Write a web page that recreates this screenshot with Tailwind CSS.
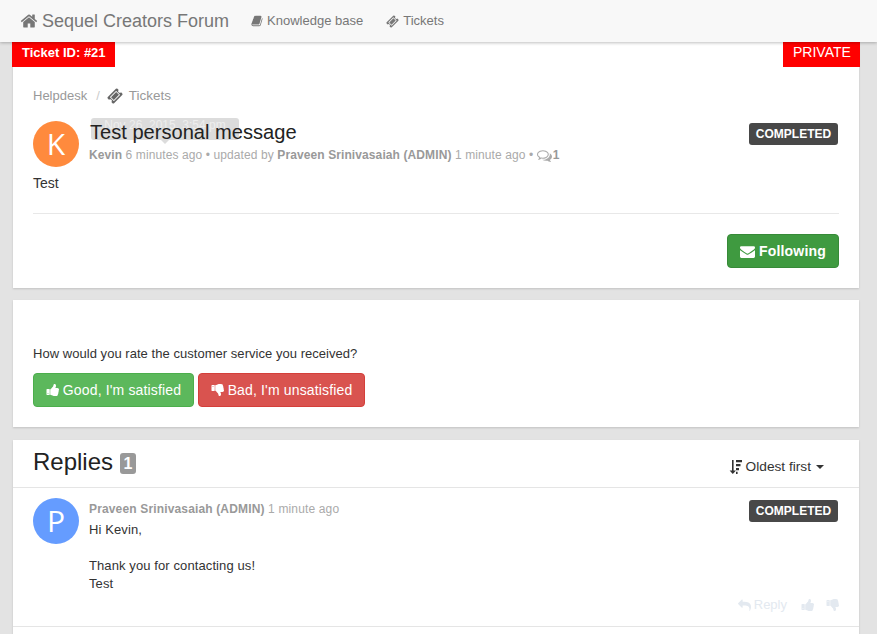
<!DOCTYPE html>
<html lang="en">
<head>
    <meta charset="UTF-8">
    <title>Sequel Creators Forum</title>
    <script src="https://cdn.jsdelivr.net/npm/@tailwindcss/browser@4"></script>
</head>
<body class="bg-[#e3e3e3] h-[634px] overflow-hidden font-['Liberation_Sans',Arial,sans-serif] text-[14px] leading-[18px] text-[#333]">
    <!-- Navbar -->
    <nav class="h-[42px] bg-[#f8f8f8] shadow-[0_1px_3px_rgba(0,0,0,0.25)] relative z-10 flex items-center pl-[20px] text-[#777]">
        <a class="flex items-center text-[18px] mr-[22px]">
            <svg class="w-[18px] h-[18px] mr-[4px] fill-[#777]" viewBox="0 0 1792 1792"><path d="M1472 992v480q0 26-19 45t-45 19h-384v-384h-256v384h-384q-26 0-45-19t-19-45v-480q0-1 .5-3t.5-3l575-474 575 474q1 2 1 6zm223-69l-62 74q-8 9-21 11h-3q-13 0-21-7l-692-577-692 577q-12 8-24 7-13-2-21-11l-62-74q-8-10-7-23.5t11-21.5l719-599q32-26 76-26t76 26l244 204v-195q0-14 9-23t23-9h192q14 0 23 9t9 23v408l219 182q10 8 11 21.5t-7 23.5z"/></svg>
            Sequel Creators Forum
        </a>
        <a class="flex items-center text-[13px] mr-[23px]">
            <svg class="w-[12px] h-[12px] mr-[4px] fill-[#777]" viewBox="0 0 1792 1792"><path d="M1703 478q40 57 18 129l-275 906q-19 64-76.5 107.5t-122.5 43.5h-923q-77 0-148.5-53.5t-99.5-131.5q-24-67-2-127 0-4 3-27t4-37q1-8-3-21.5t-3-19.5q2-11 8-21t16.5-23.5 16.5-23.5q23-38 45-91.5t30-91.5q3-10 .5-30t-.5-28q3-11 17-28t17-23q21-36 42-92t25-90q1-9-2.5-32t.5-28q4-13 22-30.5t22-22.5q19-26 42.5-84.5t27.5-96.5q1-8-3-25.5t-2-26.5q2-8 9-18t18-23 17-21q8-12 16.5-30.5t15-35 16-36 19.5-32 26.5-23.5 36-11.5 47.5 5.5l-1 3q38-9 51-9h761q74 0 114 56t18 130l-274 906q-36 119-71.5 153.5t-128.5 34.5h-869q-27 0-38 15-11 16-1 43 24 70 144 70h923q29 0 56-15.5t35-41.5l300-987q7-22 5-57 38 15 59 43z"/></svg>
            Knowledge base
        </a>
        <a class="flex items-center text-[13px]">
            <svg class="w-[13px] h-[13px] mr-[4px] fill-[#777]" viewBox="0 0 1792 1792"><path d="M1024 452l316 316-572 572-316-316zm-211 979l618-618q19-19 19-45t-19-45l-362-362q-18-18-45-18t-45 18l-618 618q-19 19-19 45t19 45l362 362q18 18 45 18t45-18zm889-637l-907 908q-37 37-90.5 37t-90.5-37l-126-126q56-56 56-136t-56-136-136-56-136 56l-125-126q-37-37-37-90.5t37-90.5l907-906q37-37 90.5-37t90.5 37l125 125q-56 56-56 136t56 136 136 56 136-56l126 125q37 37 37 90.5t-37 90.5z"/></svg>
            Tickets
        </a>
    </nav>

    <main class="ml-[13px] w-[846px] flex flex-col">
        <!-- Ticket -->
        <section class="relative h-[246px] bg-white shadow-[0_1px_2px_rgba(0,0,0,0.15)] px-[20px]">
            <span class="absolute left-[-1px] top-0 w-[103px] h-[25px] bg-[#ff0000] text-white font-bold text-[13px] leading-[21px] pl-[10px]">Ticket ID: #21</span>
            <span class="absolute right-[-1px] top-0 w-[77px] h-[25px] bg-[#ff0000] text-white text-[14px] leading-[21px] pl-[10px]">PRIVATE</span>

            <div class="pt-[46px] flex items-center h-[62px] text-[13px] text-[#999]">
                <span>Helpdesk</span>
                <span class="ml-[9px] mr-[7px] text-[#ccc]">/</span>
                <svg class="w-[16px] h-[16px] mr-[6px] fill-[#666]" viewBox="0 0 1792 1792"><path d="M1024 452l316 316-572 572-316-316zm-211 979l618-618q19-19 19-45t-19-45l-362-362q-18-18-45-18t-45 18l-618 618q-19 19-19 45t19 45l362 362q18 18 45 18t45-18zm889-637l-907 908q-37 37-90.5 37t-90.5-37l-126-126q56-56 56-136t-56-136-136-56-136 56l-125-126q-37-37-37-90.5t37-90.5l907-906q37-37 90.5-37t90.5 37l125 125q-56 56-56 136t56 136 136 56 136-56l126 125q37 37 37 90.5t-37 90.5z"/></svg>
                <span class="text-[13.5px]">Tickets</span>
            </div>

            <div class="flex mt-[17px] pr-[1px]">
                <div class="w-[46px] h-[46px] rounded-full bg-[#ff8a3d] text-white text-[30px] leading-[46px] text-center font-['Open_Sans',sans-serif] shrink-0">K</div>
                <div class="relative ml-[10px] flex-1">
                    <!-- tooltip left behind the title -->
                    <div class="absolute left-[2px] top-[-3px] w-[148px] h-[22px] rounded-[3px] bg-[#dcdcdc] text-center text-[12px] leading-[14px] text-[#eee]">
                        Nov 26, 2015, 3:54 pm
                        <span class="absolute left-[70px] top-[22px] w-0 h-0 border-x-[4px] border-x-transparent border-t-[4px] border-t-[#dcdcdc]"></span>
                    </div>
                    <h1 class="relative left-[1px] top-[-1px] text-[20.1px] leading-[24px] text-[#222] h-[22px]">Test personal message</h1>
                    <p class="mt-[4px] text-[12px] leading-[16px] tracking-[0.1px] text-[#aaa] flex items-center whitespace-pre"><b class="text-[#999]">Kevin</b> 6 minutes ago • updated by <b class="text-[#999]">Praveen Srinivasaiah (ADMIN)</b> 1 minute ago • <svg class="w-[15px] h-[15px] fill-[#aaa]" viewBox="0 0 1792 1792"><path d="M704 384q-153 0-286 52t-211.5 141-78.5 191q0 82 53 158t149 132l97 56-35 84q34-20 62-39l44-31 53 10q78 14 153 14 153 0 286-52t211.5-141 78.5-191-78.5-191-211.5-141-286-52zm0-128q191 0 353.5 68.5t256.5 186.5 94 257-94 257-256.5 186.5-353.5 68.5q-86 0-176-16-124 88-278 128-36 9-86 16h-3q-11 0-20.5-8t-11.5-21q-1-3-1-6.5t.5-6.5 2-6l2.5-5 3.5-5.5 4-5 4.5-5 4-4.5q5-6 23-25t26-29.5 22.5-29 25-38.5 20.5-44q-124-72-195-177t-71-224q0-139 94-257t256.5-186.5 353.5-68.5zm822 1169q10 24 20.5 44t25 38.5 22.5 29 26 29.5 23 25q1 1 4 4.5t4.5 5 4 5 3.5 5.5l2.5 5 2 6 .5 6.5-1 6.5q-3 14-13 22t-22 7q-50-7-86-16-154-40-278-128-90 16-176 16-271 0-472-132 58 4 88 4 161 0 309-45t264-129q125-92 192-212t67-254q0-77-23-152 129 71 204 178t75 230q0 120-71 224.5t-195 176.5z"/></svg><b class="text-[#999] ml-[1px]">1</b></p>
                </div>
                <span class="self-start mt-[2px] w-[89px] h-[22px] rounded-[3px] bg-[#484848] text-white font-bold text-[12px] leading-[22px] text-center">COMPLETED</span>
            </div>

            <p class="text-[14px] mt-[7px] leading-[18px]">Test</p>
            <hr class="mt-[21px] border-[#e8e8e8] w-[806px]">
            <div class="flex justify-end mt-[20px] w-[806px]">
                <button class="w-[112px] h-[34px] rounded-[4px] bg-[#3f9a40] border border-[#378a38] text-white font-bold text-[14px] tracking-[0.2px] flex items-center justify-center">
                    <svg class="w-[15px] h-[15px] mr-[4px] fill-white" viewBox="0 0 1792 1792"><path d="M1792 710v794q0 66-47 113t-113 47h-1472q-66 0-113-47t-47-113v-794q44 49 101 87 362 246 497 345 57 42 92.5 65.5t94.5 48 110 24.5h2q51 0 110-24.5t94.5-48 92.5-65.5q170-123 498-345 57-39 100-87zm0-294q0 79-49 151t-122 123q-376 261-468 325-10 7-42.5 30.5t-54 38-52 32.5-57.5 27-50 9h-2q-23 0-50-9t-57.5-27-52-32.5-54-38-42.5-30.5q-91-64-262-182.5t-205-142.5q-62-42-117-115.5t-55-136.5q0-78 41.5-130t118.5-52h1472q65 0 112.5 47t47.5 113z"/></svg>
                    Following
                </button>
            </div>
        </section>

        <!-- Rating -->
        <section class="mt-[12px] h-[127px] bg-white shadow-[0_1px_2px_rgba(0,0,0,0.15)] px-[20px] pt-[45px]">
            <p class="text-[13px] tracking-[0.04px] leading-[18px]">How would you rate the customer service you received?</p>
            <div class="flex mt-[10px] gap-[4px]">
                <button class="w-[161px] h-[34px] rounded-[4px] bg-[#5cb85c] border border-[#4cae4c] text-white text-[14px] tracking-[0.15px] flex items-center justify-center">
                    <svg class="w-[14px] h-[14px] mr-[3px] fill-white" viewBox="0 0 1792 1792"><path d="M320 1344q0-26-19-45t-45-19q-27 0-45.5 19t-18.5 45q0 27 18.5 45.5t45.5 18.5q26 0 45-18.5t19-45.5zm160-512v640q0 26-19 45t-45 19h-288q-26 0-45-19t-19-45v-640q0-26 19-45t45-19h288q26 0 45 19t19 45zm1184 0q0 86-55 149 15 44 15 76 3 76-43 137 17 56 0 117-15 57-54 94 9 112-49 181-64 76-197 78h-129q-66 0-144-15.5t-121.5-29-120.5-39.5q-123-43-158-44-26-1-45-19.5t-19-44.5v-641q0-25 18-43.5t43-20.5q24-2 76-59t101-121q68-87 101-120 18-18 31-48t17.5-48.5 13.5-60.5q7-39 12.5-61t19.5-52 34-50q19-19 45-19 46 0 82.5 10.5t60 26 40 40.5 24 45 12 50 5 45 .5 39q0 38-9.5 76t-19 60-27.5 56q-3 6-10 18t-11 22-8 24h277q78 0 135 57t57 135z"/></svg>
                    Good, I'm satisfied
                </button>
                <button class="w-[167px] h-[34px] rounded-[4px] bg-[#d9534f] border border-[#d43f3a] text-white text-[14px] tracking-[0.15px] flex items-center justify-center">
                    <svg class="w-[14px] h-[14px] mr-[3px] fill-white -scale-y-100" viewBox="0 0 1792 1792"><path d="M320 1344q0-26-19-45t-45-19q-27 0-45.5 19t-18.5 45q0 27 18.5 45.5t45.5 18.5q26 0 45-18.5t19-45.5zm160-512v640q0 26-19 45t-45 19h-288q-26 0-45-19t-19-45v-640q0-26 19-45t45-19h288q26 0 45 19t19 45zm1184 0q0 86-55 149 15 44 15 76 3 76-43 137 17 56 0 117-15 57-54 94 9 112-49 181-64 76-197 78h-129q-66 0-144-15.5t-121.5-29-120.5-39.5q-123-43-158-44-26-1-45-19.5t-19-44.5v-641q0-25 18-43.5t43-20.5q24-2 76-59t101-121q68-87 101-120 18-18 31-48t17.5-48.5 13.5-60.5q7-39 12.5-61t19.5-52 34-50q19-19 45-19 46 0 82.5 10.5t60 26 40 40.5 24 45 12 50 5 45 .5 39q0 38-9.5 76t-19 60-27.5 56q-3 6-10 18t-11 22-8 24h277q78 0 135 57t57 135z"/></svg>
                    Bad, I'm unsatisfied
                </button>
            </div>
        </section>

        <!-- Replies -->
        <section class="mt-[13px] bg-white h-[200px] shadow-[0_1px_2px_rgba(0,0,0,0.15)]">
            <header class="h-[48px] border-b border-[#e5e5e5] flex items-center pl-[20px] pr-[35px]">
                <h2 class="text-[24px] leading-[28px] text-[#222] mb-[4px]">Replies</h2>
                <span class="ml-[7px] w-[16px] h-[21px] rounded-[3px] bg-[#999] text-white font-bold text-[16px] leading-[21px] text-center">1</span>
                <div class="ml-auto flex items-center text-[13.7px] text-[#333] mt-[6px]">
                    <svg class="w-[13px] h-[14px] mr-[4px] fill-[#333]" viewBox="0 0 13 14"><path d="M3 0h1.6v10.5H7L3.8 14 .6 10.5H3zM7 0h6v2.2H7zM7 4h4.5v2.2H7zM7 8h3v2.2H7zM7 11.8h1.6V14H7z"/></svg>
                    Oldest first
                    <span class="ml-[5px] w-0 h-0 border-x-[4px] border-x-transparent border-t-[4px] border-t-[#333]"></span>
                </div>
            </header>
            <article class="relative h-[139px] border-b border-[#e5e5e5] pl-[20px] pr-[21px] pt-[10px] flex">
                <div class="w-[46px] h-[46px] rounded-full bg-[#659cff] text-white text-[30px] leading-[46px] text-center font-['Open_Sans',sans-serif] shrink-0">P</div>
                <div class="ml-[10px] flex-1">
                    <p class="text-[12px] leading-[16px] tracking-[0.15px] text-[#aaa] mt-[3px] whitespace-pre"><b class="text-[#999]">Praveen Srinivasaiah (ADMIN)</b> 1 minute ago</p>
                    <div class="text-[13px] tracking-[0.1px] leading-[18px] mt-[4px]">
                        <p>Hi Kevin,</p>
                        <p class="mt-[18px]">Thank you for contacting us!</p>
                        <p>Test</p>
                    </div>
                </div>
                <span class="self-start mt-[2px] w-[89px] h-[22px] rounded-[3px] bg-[#484848] text-white font-bold text-[12px] leading-[22px] text-center">COMPLETED</span>
                <div class="absolute right-[19px] bottom-[12px] flex items-center text-[13px] text-[#e3e9f0]">
                    <svg class="w-[13px] h-[13px] mr-[3px] fill-[#e3e9f0]" viewBox="0 0 1792 1792"><path d="M1792 1120q0 166-127 451-3 7-10.5 24t-13.5 30-13 22q-12 17-28 17-15 0-23.5-10t-8.5-25q0-9 2.5-26.5t2.5-23.5q5-68 5-123 0-101-17.5-181t-48.5-138.5-80-101-105.5-69.5-133-42.5-154-21.5-175.5-6h-224v256q0 26-19 45t-45 19-45-19l-512-512q-19-19-19-45t19-45l512-512q19-19 45-19t45 19 19 45v256h224q713 0 875 403 53 134 53 333z"/></svg>
                    Reply
                    <svg class="w-[14px] h-[14px] ml-[14px] fill-[#e3e9f0]" viewBox="0 0 1792 1792"><path d="M320 1344q0-26-19-45t-45-19q-27 0-45.5 19t-18.5 45q0 27 18.5 45.5t45.5 18.5q26 0 45-18.5t19-45.5zm160-512v640q0 26-19 45t-45 19h-288q-26 0-45-19t-19-45v-640q0-26 19-45t45-19h288q26 0 45 19t19 45zm1184 0q0 86-55 149 15 44 15 76 3 76-43 137 17 56 0 117-15 57-54 94 9 112-49 181-64 76-197 78h-129q-66 0-144-15.5t-121.5-29-120.5-39.5q-123-43-158-44-26-1-45-19.5t-19-44.5v-641q0-25 18-43.5t43-20.5q24-2 76-59t101-121q68-87 101-120 18-18 31-48t17.5-48.5 13.5-60.5q7-39 12.5-61t19.5-52 34-50q19-19 45-19 46 0 82.5 10.5t60 26 40 40.5 24 45 12 50 5 45 .5 39q0 38-9.5 76t-19 60-27.5 56q-3 6-10 18t-11 22-8 24h277q78 0 135 57t57 135z"/></svg>
                    <svg class="w-[14px] h-[14px] ml-[11px] fill-[#e3e9f0] -scale-y-100" viewBox="0 0 1792 1792"><path d="M320 1344q0-26-19-45t-45-19q-27 0-45.5 19t-18.5 45q0 27 18.5 45.5t45.5 18.5q26 0 45-18.5t19-45.5zm160-512v640q0 26-19 45t-45 19h-288q-26 0-45-19t-19-45v-640q0-26 19-45t45-19h288q26 0 45 19t19 45zm1184 0q0 86-55 149 15 44 15 76 3 76-43 137 17 56 0 117-15 57-54 94 9 112-49 181-64 76-197 78h-129q-66 0-144-15.5t-121.5-29-120.5-39.5q-123-43-158-44-26-1-45-19.5t-19-44.5v-641q0-25 18-43.5t43-20.5q24-2 76-59t101-121q68-87 101-120 18-18 31-48t17.5-48.5 13.5-60.5q7-39 12.5-61t19.5-52 34-50q19-19 45-19 46 0 82.5 10.5t60 26 40 40.5 24 45 12 50 5 45 .5 39q0 38-9.5 76t-19 60-27.5 56q-3 6-10 18t-11 22-8 24h277q78 0 135 57t57 135z"/></svg>
                </div>
            </article>
        </section>
    </main>
</body>
</html>
